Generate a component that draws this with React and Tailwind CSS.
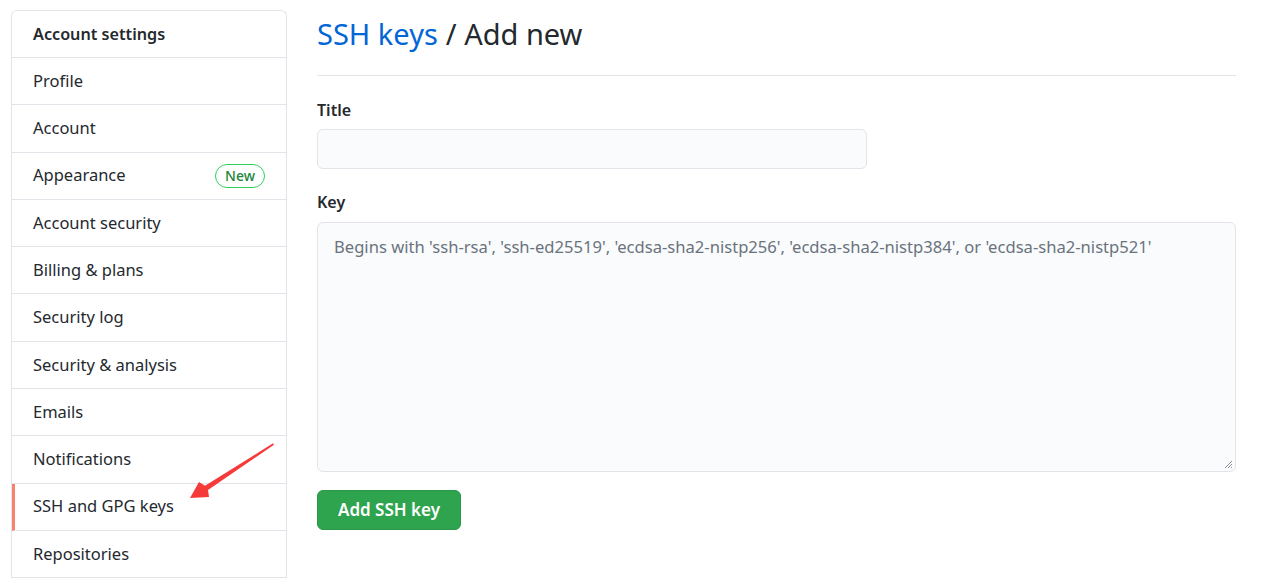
import React from 'react'

const items = [
  'Profile',
  'Account',
  'Appearance',
  'Account security',
  'Billing & plans',
  'Security log',
  'Security & analysis',
  'Emails',
  'Notifications',
  'SSH and GPG keys',
  'Repositories',
]

function SideNav() {
  return (
    <nav className="w-[276px] shrink-0 overflow-hidden rounded-t-md border border-b-0 border-[#e1e4e8]">
      <div className="flex h-[47px] items-center border-b border-[#e1e4e8] px-[21px] text-[16.2px] font-semibold text-[#24292e]">
        Account settings
      </div>
      {items.map((label) => {
        const active = label === 'SSH and GPG keys'
        return (
          <div
            key={label}
            className={
              active
                ? 'flex h-[47.3px] items-center border-b border-[#e1e4e8] border-l-[3px] border-l-[#f9826c] pl-[18px] pr-[20px] text-[16.5px] text-[#24292e]'
                : 'flex h-[47.3px] items-center border-b border-[#e1e4e8] px-[21px] text-[16.5px] text-[#24292e]'
            }
          >
            <span className="flex-1">{label}</span>
            {label === 'Appearance' && (
              <span className="flex h-[24px] items-center rounded-full border border-[#34d058] px-[9px] text-[14px] font-medium text-[#22863a]">
                New
              </span>
            )}
          </div>
        )
      })}
    </nav>
  )
}

export default function App() {
  return (
    <div
      className="relative h-[581px] w-[1261px] overflow-hidden bg-white"
      style={{ fontFamily: '"Noto Sans", "Open Sans", sans-serif' }}
    >
      <div className="flex gap-[30px] pl-[11px] pt-[10px]">
        <SideNav />
        <main className="w-[919px]">
          <div className="flex h-[66px] items-start border-b border-[#e1e4e8] pt-[4px] text-[29px] leading-[40px] text-[#24292e]">
            <span className="text-[#0366d6]">SSH keys</span>
            <span className="ml-[8px]">/ Add new</span>
          </div>
          <div className="mt-[23px] text-[16px] font-semibold leading-[22px] text-[#24292e]">Title</div>
          <div className="mt-[8px] h-[40px] w-[550px] rounded-md border border-[#e1e4e8] bg-[#fafbfc]" />
          <div className="mt-[22px] text-[16px] font-semibold leading-[22px] text-[#24292e]">Key</div>
          <div className="relative mt-[9px] h-[250px] w-full rounded-md border border-[#e1e4e8] bg-[#fafbfc] px-[16px] pt-[12px] text-[16.6px] leading-[24px] text-[#6a737d]">
            Begins with 'ssh-rsa', 'ssh-ed25519', 'ecdsa-sha2-nistp256', 'ecdsa-sha2-nistp384', or 'ecdsa-sha2-nistp521'
            <svg className="absolute bottom-[2px] right-[2px]" width="10" height="10" viewBox="0 0 10 10">
              <path d="M9 2 L2 9 M9 5 L5 9 M9 8 L8 9" stroke="#8a8f95" strokeWidth="1" />
            </svg>
          </div>
          <button className="mt-[18px] flex h-[40px] w-[144px] items-center justify-center rounded-md border border-[#2c974b] bg-[#2ea44f] text-[17px] font-semibold text-white">
            Add SSH key
          </button>
        </main>
      </div>
      <svg className="pointer-events-none absolute left-0 top-0" width="1261" height="581">
        <path d="M273 443.3 L274 444.7 L208 490 L209 497 L190 498 L199 482 L205 485.8 Z" fill="#f53a3a" />
      </svg>
    </div>
  )
}
